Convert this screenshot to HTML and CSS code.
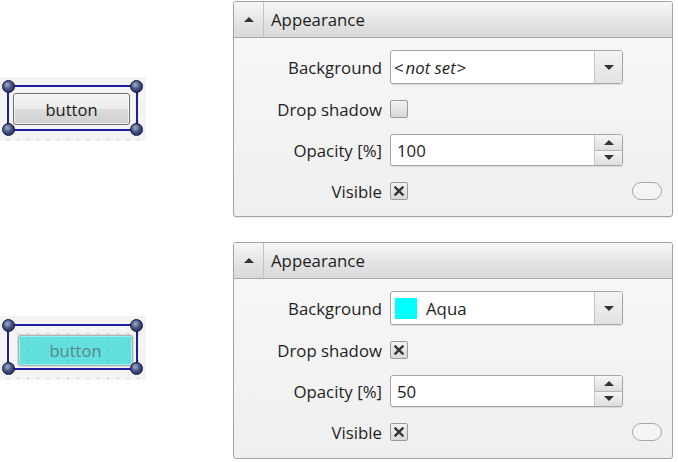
FILE: index.html
```html
<!DOCTYPE html>
<html>
<head>
<meta charset="utf-8">
<link rel="stylesheet" href="styles.css">
</head>
<body>
<div class="page">
  <div class="row">
    <div class="preview">
      <div class="canvas">
        <div class="selection">
          <div class="btn">button</div>
          <span class="handle tl"></span><span class="handle tr"></span>
          <span class="handle bl"></span><span class="handle br"></span>
        </div>
      </div>
    </div>
    <div class="panel">
      <div class="head">
        <div class="toggle"><span class="tri-up"></span></div>
        <div class="title">Appearance</div>
      </div>
      <div class="body">
        <div class="prow">
          <div class="label">Background</div>
          <div class="combo">
            <div class="combo-text">&lt;<i>not set</i>&gt;</div>
            <div class="combo-btn"><span class="tri-down"></span></div>
          </div>
        </div>
        <div class="prow check-row">
          <div class="label">Drop shadow</div>
          <div class="check"></div>
        </div>
        <div class="prow">
          <div class="label">Opacity [%]</div>
          <div class="spin">
            <div class="spin-text">100</div>
            <div class="spin-btns">
              <div class="spin-btn"><span class="tri-up"></span></div>
              <div class="spin-btn"><span class="tri-down"></span></div>
            </div>
          </div>
        </div>
        <div class="prow check-row">
          <div class="label">Visible</div>
          <div class="check"><svg class="xmark" viewBox="0 0 10 10"><path d="M1.5 1.5L8.5 8.5M8.5 1.5L1.5 8.5"/></svg></div>
          <div class="pill"></div>
        </div>
      </div>
    </div>
  </div>

  <div class="row second">
    <div class="preview">
      <div class="canvas">
        <div class="selection">
          <div class="btn aqua">button</div>
          <span class="handle tl"></span><span class="handle tr"></span>
          <span class="handle bl"></span><span class="handle br"></span>
        </div>
      </div>
    </div>
    <div class="panel">
      <div class="head">
        <div class="toggle"><span class="tri-up"></span></div>
        <div class="title">Appearance</div>
      </div>
      <div class="body">
        <div class="prow">
          <div class="label">Background</div>
          <div class="combo">
            <div class="combo-text"><span class="swatch"></span>Aqua</div>
            <div class="combo-btn"><span class="tri-down"></span></div>
          </div>
        </div>
        <div class="prow check-row">
          <div class="label">Drop shadow</div>
          <div class="check"><svg class="xmark" viewBox="0 0 10 10"><path d="M1.5 1.5L8.5 8.5M8.5 1.5L1.5 8.5"/></svg></div>
        </div>
        <div class="prow">
          <div class="label">Opacity [%]</div>
          <div class="spin">
            <div class="spin-text">50</div>
            <div class="spin-btns">
              <div class="spin-btn"><span class="tri-up"></span></div>
              <div class="spin-btn"><span class="tri-down"></span></div>
            </div>
          </div>
        </div>
        <div class="prow check-row">
          <div class="label">Visible</div>
          <div class="check"><svg class="xmark" viewBox="0 0 10 10"><path d="M1.5 1.5L8.5 8.5M8.5 1.5L1.5 8.5"/></svg></div>
          <div class="pill"></div>
        </div>
      </div>
    </div>
  </div>
</div>
</body>
</html>
```

FILE: styles.css
```css
* { box-sizing: border-box; }
html, body { margin: 0; padding: 0; background: #ffffff; }
body {
  font-family: "Open Sans", "Noto Sans", "Liberation Sans", sans-serif;
  font-size: 16.8px;
  color: #1e1e1e;
}
.page {
  display: flex;
  flex-direction: column;
  gap: 25px;
  padding-top: 1px;
}
.row {
  display: flex;
  align-items: center;
}
.preview {
  width: 233px;
  display: flex;
}
.second .preview { margin-top: -5px; }

.canvas {
  width: 146px;
  height: 64px;
  background-color: #f4f4f4;
  background-image: radial-gradient(circle, #c4c4c4 0.7px, transparent 1.1px);
  background-size: 10px 9px;
  background-position: 3px 4px;
  padding: 8px 8px 10px 7px;
}
.selection {
  position: relative;
  width: 131px;
  height: 46px;
  border: 2px solid #1f1fa6;
  padding: 6px 6px 0 4px;
}
.handle {
  position: absolute;
  width: 13px;
  height: 13px;
  border-radius: 50%;
  background: radial-gradient(circle at 40% 35%, #a4aec8 0%, #45527f 45%, #18204f 100%);
  border: 1px solid #0c1140;
}
.handle.tl { left: -7px; top: -7px; }
.handle.tr { right: -7px; top: -7px; }
.handle.bl { left: -7px; bottom: -7px; }
.handle.br { right: -7px; bottom: -7px; }

.btn {
  width: 117px;
  height: 32px;
  border: 1px solid #707070;
  border-radius: 3px;
  background: linear-gradient(#f3f3f3 0%, #ebebeb 50%, #dddddd 51%, #cfcfcf 100%);
  box-shadow: inset 0 0 0 1px rgba(255,255,255,0.7);
  display: flex;
  align-items: center;
  justify-content: center;
  font-size: 16.5px;
  color: #1a1a1a;
}
.btn.aqua {
  width: 115px;
  height: 31px;
  margin-left: 5px;
  margin-top: 3px;
  border: 1px solid #a9b5b5;
  background: rgba(0, 210, 210, 0.6);
  box-shadow: 0 0 0 1px rgba(200,200,200,0.6), inset 0 0 0 1px rgba(180,245,245,0.7);
  color: #5b8686;
}

.panel {
  width: 440px;
  height: 216px;
  border: 1px solid #a3a3a3;
  border-radius: 3px;
  background: linear-gradient(#f8f8f8, #efefef);
  box-shadow: 0 1px 1px rgba(0,0,0,0.08);
}
.second .panel { height: 217px; }
.head {
  height: 36px;
  display: flex;
  border-bottom: 1px solid #a8a8a8;
  background: linear-gradient(#f7f7f7, #e3e3e3 60%, #d9d9d9);
  border-radius: 2px 2px 0 0;
}
.toggle {
  width: 30px;
  border-right: 1px solid #c2c2c2;
  display: flex;
  align-items: center;
  justify-content: center;
}
.title {
  padding-left: 7px;
  display: flex;
  align-items: center;
}
.tri-up, .tri-down {
  width: 0;
  height: 0;
  border-left: 5px solid transparent;
  border-right: 5px solid transparent;
}
.tri-up { border-bottom: 5px solid #333; }
.tri-down { border-top: 5px solid #333; }

.body {
  display: flex;
  flex-direction: column;
  gap: 16px;
  padding-top: 12px;
}
.prow {
  display: flex;
  align-items: center;
  gap: 8px;
  padding-right: 10px;
}
.label {
  width: 148px;
  text-align: right;
  white-space: nowrap;
}
.check-row { height: 18px; }

.combo, .spin {
  width: 233px;
  display: flex;
  border: 1px solid #a6a6a6;
  border-radius: 3px;
  background: #ffffff;
  box-shadow: 0 1px 1px rgba(0,0,0,0.1);
  overflow: hidden;
}
.combo { height: 34px; }
.spin { height: 32px; }
.combo-text, .spin-text {
  flex: 1;
  display: flex;
  align-items: center;
  padding-left: 6px;
}
.combo-text { padding-left: 3px; }
.combo-text i { padding: 0 1px 0 2px; }
.swatch {
  width: 22px;
  height: 21px;
  background: #00ffff;
  margin-right: 9px;
  margin-left: 1px;
}
.combo-btn {
  width: 28px;
  border-left: 1px solid #c4c4c4;
  background: linear-gradient(#f4f4f4, #e2e2e2);
  display: flex;
  align-items: center;
  justify-content: center;
}
.spin-btns {
  width: 28px;
  display: flex;
  flex-direction: column;
  border-left: 1px solid #c4c4c4;
}
.spin-btn {
  flex: 1;
  background: linear-gradient(#f6f6f6, #dedede);
  display: flex;
  align-items: center;
  justify-content: center;
}
.spin-btn + .spin-btn { border-top: 1px solid #b8b8b8; }

.check {
  width: 18px;
  height: 18px;
  border: 1px solid #9a9a9a;
  border-radius: 2px;
  background: linear-gradient(#f2f2f2, #d8d8d8);
  display: flex;
  align-items: center;
  justify-content: center;
}
.xmark {
  width: 10px;
  height: 10px;
  fill: none;
  stroke: #333;
  stroke-width: 2.4;
  stroke-linecap: square;
}
.pill {
  margin-left: auto;
  width: 30px;
  height: 18px;
  border: 1px solid #a8a8a8;
  border-radius: 9px;
  background: #f4f4f4;
}
```
